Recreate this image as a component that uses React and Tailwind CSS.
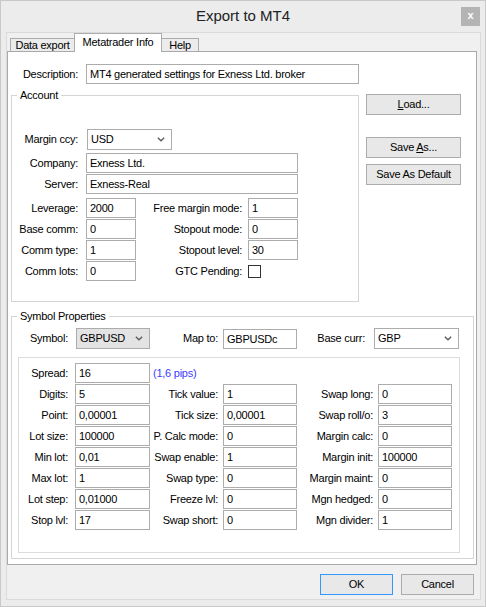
import React from 'react';

const Chevron = () => (
    <svg width="8" height="5" viewBox="0 0 8 5" className="shrink-0">
        <path d="M0.8 0.8 L4 3.8 L7.2 0.8" fill="none" stroke="#5a5a5a" strokeWidth="1.3" />
    </svg>
);

const Field = ({ value, w }) => (
    <input
        readOnly
        value={value}
        className={`h-[20px] border border-[#acacac] bg-white px-[3px] text-[11px] text-black outline-none ${w}`}
    />
);

const Combo = ({ value, w, gray }) => (
    <div className={`h-[21px] flex items-center justify-between border border-[#acacac] pl-[3px] pr-[6px] ${gray ? 'bg-[#e3e3e3]' : 'bg-white'} ${w}`}>
        <span>{value}</span>
        <Chevron />
    </div>
);

const Btn = ({ children, w, primary }) => (
    <button
        type="button"
        className={`h-[21px] flex items-center justify-center border bg-[#e8e8e8] text-[11px] text-black ${primary ? 'border-[#3399ff]' : 'border-[#acacac]'} ${w}`}
    >
        {children}
    </button>
);

const Legend = ({ children }) => (
    <span className="self-start -mt-[8px] ml-[5px] px-[3px] bg-white leading-[14px]">{children}</span>
);

const symbolRows = [
    ['Digits:', '5', 'Tick value:', '1', 'Swap long:', '0'],
    ['Point:', '0,00001', 'Tick size:', '0,00001', 'Swap roll/o:', '3'],
    ['Lot size:', '100000', 'P. Calc mode:', '0', 'Margin calc:', '0'],
    ['Min lot:', '0,01', 'Swap enable:', '1', 'Margin init:', '100000'],
    ['Max lot:', '1', 'Swap type:', '0', 'Margin maint:', '0'],
    ['Lot step:', '0,01000', 'Freeze lvl:', '0', 'Mgn hedged:', '0'],
    ['Stop lvl:', '17', 'Swap short:', '0', 'Mgn divider:', '1'],
];

const accountRows = [
    ['Leverage:', '2000', 'Free margin mode:', '1'],
    ['Base comm:', '0', 'Stopout mode:', '0'],
    ['Comm type:', '1', 'Stopout level:', '30'],
    ['Comm lots:', '0', 'GTC Pending:', null],
];

export default function App() {
    return (
        <div className="w-[486px] h-[607px] border border-[#c9c9c9] bg-[#ececec] text-[11px] tracking-[-0.25px] text-black font-['Liberation_Sans',Arial,sans-serif] overflow-hidden">
            {/* title bar */}
            <div className="h-[31px] grid grid-cols-[1fr_auto_1fr] items-start">
                <div />
                <div className="mt-[5px] text-[15px] leading-[20px] tracking-normal text-[#222]">Export to MT4</div>
                <div className="flex justify-end pr-[5px]">
                    <div className="mt-[6px] w-[19px] h-[19px] bg-[#b4b4b4] flex items-center justify-center text-white text-[11px] font-bold leading-none pb-[2px]">x</div>
                </div>
            </div>

            {/* client area */}
            <div className="ml-[5px] w-[475px] h-[568px] border border-[#dadada] bg-[#f0f0f0] flex flex-col">
                {/* tabs */}
                <div className="h-[18px] flex items-end pl-[3px]">
                    <div className="w-[64px] h-[13px] border-l border-t border-[#acacac] bg-[#ececec] text-center leading-[12px]">Data export</div>
                    <div className="relative z-10 w-[88px] h-[19px] -mb-[1px] border-l border-t border-r border-[#acacac] bg-white text-center pt-[2px] leading-[13px]">Metatrader Info</div>
                    <div className="w-[37px] h-[13px] border-t border-r border-[#acacac] bg-[#ececec] text-center leading-[12px]">Help</div>
                </div>

                {/* panel */}
                <div className="w-[470px] h-[514px] border border-[#a9a9a9] bg-white flex flex-col">
                    <div className="mt-[12px] flex items-center">
                        <div className="w-[70px] text-right">Description:</div>
                        <Field value="MT4 generated settings for Exness Ltd. broker" w="ml-[8px] w-[273px]" />
                    </div>

                    <div className="flex">
                        {/* account group */}
                        <div className="ml-[3px] mt-[11px] w-[348px] border border-[#d5d5d5] flex flex-col pb-[20px]">
                            <Legend>Account</Legend>
                            <div className="mt-[27px] flex items-center h-[20px]">
                                <div className="w-[66px] text-right">Margin ccy:</div>
                                <Combo value="USD" w="ml-[9px] w-[85px]" />
                            </div>
                            <div className="mt-[4px] flex items-center">
                                <div className="w-[66px] text-right">Company:</div>
                                <Field value="Exness Ltd." w="ml-[8px] w-[212px]" />
                            </div>
                            <div className="mt-[1px] flex items-center">
                                <div className="w-[66px] text-right">Server:</div>
                                <Field value="Exness-Real" w="ml-[8px] w-[212px]" />
                            </div>
                            <div className="mt-[4px] flex flex-col gap-[1px]">
                                {accountRows.map(([l1, v1, l2, v2]) => (
                                    <div key={l1} className="flex items-center h-[20px]">
                                        <div className="w-[66px] text-right">{l1}</div>
                                        <Field value={v1} w="ml-[8px] w-[50px]" />
                                        <div className="w-[106px] text-right">{l2}</div>
                                        {v2 === null ? (
                                            <div className="ml-[6px] w-[13px] h-[13px] border border-[#333] bg-white" />
                                        ) : (
                                            <Field value={v2} w="ml-[6px] w-[50px]" />
                                        )}
                                    </div>
                                ))}
                            </div>
                        </div>

                        {/* buttons */}
                        <div className="ml-[7px] flex flex-col">
                            <Btn w="mt-[10px] w-[95px]"><span><u>L</u>oad...</span></Btn>
                            <Btn w="mt-[22px] w-[95px]"><span>Save <u>A</u>s...</span></Btn>
                            <Btn w="mt-[6px] w-[95px]">Save As Default</Btn>
                        </div>
                    </div>

                    {/* symbol properties */}
                    <div className="ml-[3px] mt-[14px] w-[463px] border border-[#d5d5d5] flex flex-col pb-[5px]">
                        <Legend>Symbol Properties</Legend>
                        <div className="mt-[5px] flex items-center h-[21px]">
                            <div className="w-[56px] text-right">Symbol:</div>
                            <Combo value="GBPUSD" w="ml-[8px] w-[74px]" gray />
                            <div className="w-[68px] text-right">Map to:</div>
                            <Field value="GBPUSDc" w="ml-[5px] w-[74px]" />
                            <div className="w-[68px] text-right">Base curr:</div>
                            <Combo value="GBP" w="ml-[9px] w-[85px]" />
                        </div>

                        <div className="ml-[6px] mt-[8px] w-[442px] h-[196px] border border-[#dcdcdc] pt-[5px] flex flex-col gap-[1px]">
                            <div className="flex items-center h-[20px]">
                                <div className="w-[49px] text-right">Spread:</div>
                                <Field value="16" w="ml-[7px] w-[75px]" />
                                <span className="ml-[3px] text-[#3b3bff]">(1,6 pips)</span>
                            </div>
                            {symbolRows.map(([l1, v1, l2, v2, l3, v3]) => (
                                <div key={l1} className="flex items-center h-[20px]">
                                    <div className="w-[49px] text-right">{l1}</div>
                                    <Field value={v1} w="ml-[7px] w-[75px]" />
                                    <div className="w-[68px] text-right">{l2}</div>
                                    <Field value={v2} w="ml-[5px] w-[74px]" />
                                    <div className="w-[76px] text-right">{l3}</div>
                                    <Field value={v3} w="ml-[5px] w-[74px]" />
                                </div>
                            ))}
                        </div>
                    </div>
                </div>

                {/* dialog buttons */}
                <div className="mt-[9px] flex justify-end gap-[8px] pr-[6px]">
                    <Btn w="w-[73px]" primary>OK</Btn>
                    <Btn w="w-[73px]">Cancel</Btn>
                </div>
            </div>
        </div>
    );
}
